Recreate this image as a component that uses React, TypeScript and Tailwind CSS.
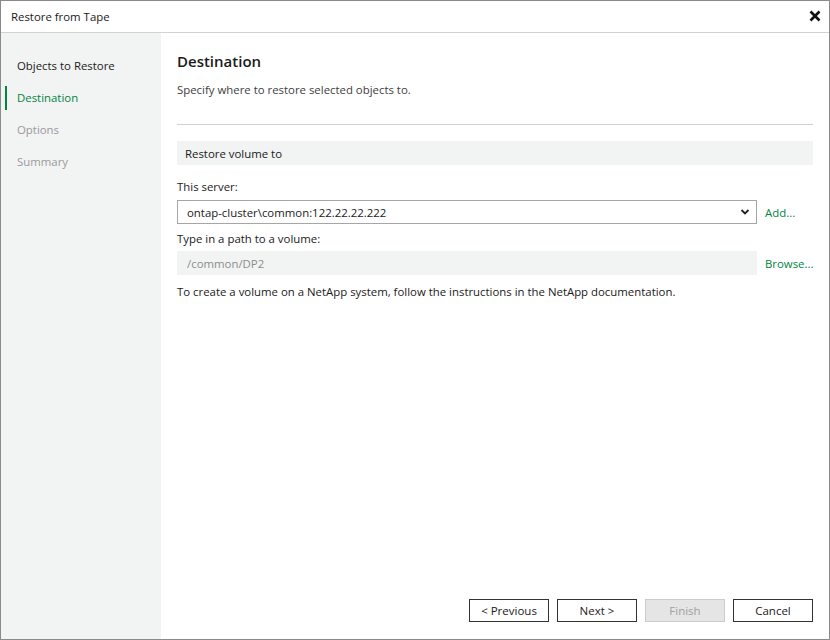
import React from 'react'

const font = { fontFamily: '"Segoe UI", "Open Sans", "Liberation Sans", sans-serif' }

const steps = [
  { label: 'Objects to Restore', state: 'done' },
  { label: 'Destination', state: 'active' },
  { label: 'Options', state: 'todo' },
  { label: 'Summary', state: 'todo' },
]

function Btn({ children, disabled }: { children: React.ReactNode; disabled?: boolean }) {
  return (
    <button
      disabled={disabled}
      className={
        disabled
          ? 'w-[80px] h-[23px] border border-[#cccccc] bg-[#e5e5e5] text-[#a0a0a0] text-[11.5px]'
          : 'w-[80px] h-[23px] border border-[#333333] bg-white text-[#1a1a1a] text-[11.5px]'
      }
    >
      {children}
    </button>
  )
}

export default function App() {
  return (
    <div style={font} className="w-[830px] h-[640px] bg-white border border-[#8a8a8a] flex flex-col text-[#1a1a1a]">
      {/* title bar */}
      <div className="h-[32px] shrink-0 flex items-center justify-between pl-[10px] pr-[8px] border-b border-[#d2d2d2]">
        <span className="text-[11.4px]">Restore from Tape</span>
        <svg width="12" height="12" viewBox="0 0 12 12" className="mt-[-2px]">
          <path d="M1.5 1.5 L10.5 10.5 M10.5 1.5 L1.5 10.5" stroke="#111" strokeWidth="2.6" />
        </svg>
      </div>

      <div className="flex flex-1 min-h-0">
        {/* sidebar */}
        <div className="w-[160px] shrink-0 bg-[#f2f3f3] pt-[17px]">
          {steps.map((s) => (
            <div key={s.label} className="h-[32px] flex items-center relative pl-[16px]">
              {s.state === 'active' && <div className="absolute left-[4px] top-[4px] w-[2px] h-[24px] bg-[#00853e]" />}
              <span
                className={
                  'text-[11.4px] ' +
                  (s.state === 'active' ? 'text-[#00853e]' : s.state === 'done' ? 'text-[#1a1a1a]' : 'text-[#9a9a9a]')
                }
              >
                {s.label}
              </span>
            </div>
          ))}
        </div>

        {/* main */}
        <div className="flex-1 flex flex-col pl-[16px] pr-[16px] pb-[17px]">
          <h1 className="text-[15px] font-semibold mt-[17px] leading-[22px]">Destination</h1>
          <p className="text-[11.4px] text-[#404040] mt-[9px]">Specify where to restore selected objects to.</p>
          <div className="h-px bg-[#d0d0d0] mt-[26px]" />

          <div className="mt-[16px] h-[24px] bg-[#f2f3f3] flex items-center pl-[8px] text-[11.4px]">Restore volume to</div>

          <div className="text-[11.4px] mt-[13px] leading-[18px]">This server:</div>
          <div className="flex items-center mt-[4px]">
            <div className="flex-1 h-[24px] border border-[#a6a6a6] flex items-center justify-between pl-[9px] pr-[6px] text-[11.4px]">
              <span>ontap-cluster\common:122.22.22.222</span>
              <svg width="10" height="8" viewBox="0 0 10 8">
                <path d="M1.5 2 L5 5.5 L8.5 2" stroke="#222" strokeWidth="1.8" fill="none" />
              </svg>
            </div>
            <span className="w-[56px] pl-[8px] text-[11.4px] text-[#00853e]">Add...</span>
          </div>

          <div className="text-[11.4px] mt-[6px] leading-[18px]">Type in a path to a volume:</div>
          <div className="flex items-center mt-[3px]">
            <div className="flex-1 h-[24px] bg-[#f2f3f3] flex items-center pl-[10px] text-[11.4px] text-[#8c8c8c]">/common/DP2</div>
            <span className="w-[56px] pl-[8px] text-[11.4px] text-[#00853e]">Browse...</span>
          </div>

          <p className="text-[11.4px] mt-[8px]">
            To create a volume on a NetApp system, follow the instructions in the NetApp documentation.
          </p>

          <div className="mt-auto flex justify-end gap-[8px]">
            <Btn>&lt; Previous</Btn>
            <Btn>Next &gt;</Btn>
            <Btn disabled>Finish</Btn>
            <Btn>Cancel</Btn>
          </div>
        </div>
      </div>
    </div>
  )
}
